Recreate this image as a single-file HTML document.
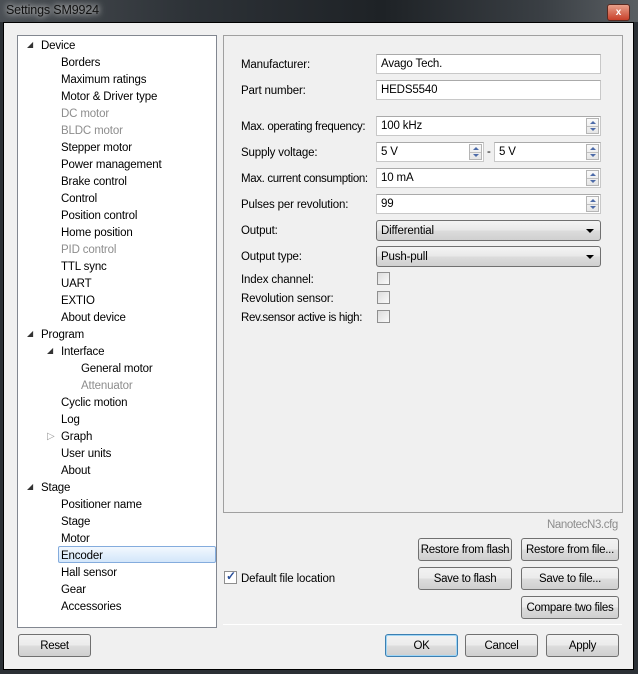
<!DOCTYPE html>
<html><head><meta charset="utf-8"><style>
*{margin:0;padding:0;box-sizing:border-box}
body{width:638px;height:674px;background:#2b3035;font-family:"Liberation Sans",sans-serif;font-size:11.5px;letter-spacing:-0.15px;color:#000;position:relative;overflow:hidden}
.title{position:absolute;left:0;top:0;width:638px;height:22px;background:linear-gradient(90deg,#4a4f54 0%,#2d3237 30%,#1e2226 60%,#3a3f44 85%,#5a5f63 100%)}
.title span{position:absolute;left:6px;top:3px;font-size:12.5px;color:#111;text-shadow:0 0 6px #ccc,0 0 8px #ccc}
.close{position:absolute;left:607px;top:4px;width:23px;height:17px;background:linear-gradient(#e8a08a,#c8402a);border:1px solid #5a2a20;border-radius:3px;color:#fff;font-size:10px;font-weight:bold;text-align:center;line-height:15px}
.client{position:absolute;left:3px;top:22px;width:631px;height:648px;background:#f0f0f0;border:1px solid #000}
.a{position:absolute}
.tree{left:17px;top:35px;width:200px;height:593px;background:#fff;border:1px solid #828790}
.ti{position:absolute;height:17px;line-height:17px;white-space:nowrap;margin-top:1px}
.g{color:#8d8d8d}
.arr{position:absolute;font-size:8px;color:#333;margin-top:1px}
.sel{left:58px;top:546px;width:158px;height:17px;border:1px solid #84acdd;border-radius:2px;background:linear-gradient(#f2f8fe,#d3e6fa)}
.panel{left:223px;top:35px;width:400px;height:478px;border:1px solid #a0a0a0;background:#f0f0f0}
.lbl{position:absolute;left:241px;white-space:nowrap;margin-top:2px}
.inp{position:absolute;height:20px;background:#fff;border:1px solid #c8c8c8;border-top-color:#aaa;padding-left:4px;line-height:19px}
.spin{position:absolute;right:1px;top:1px;width:13px;height:16px;border:1px solid #b5b5b5;background:linear-gradient(#fafafa,#e6e6e6)}
.spin:before{content:"";position:absolute;left:3px;top:2px;border:3px solid transparent;border-bottom:3px solid #4d6ba8;border-top:0}
.spin:after{content:"";position:absolute;left:3px;top:9px;border:3px solid transparent;border-top:3px solid #4d6ba8;border-bottom:0}
.spin i{position:absolute;left:0;top:7px;width:11px;height:1px;background:#c0c0c0}
.combo{position:absolute;left:376px;width:225px;height:21px;border:1px solid #707070;border-radius:3px;background:linear-gradient(#f4f4f4,#e8e8e8 50%,#dcdcdc 51%,#d0d0d0);padding-left:4px;line-height:20px}
.combo:after{content:"";position:absolute;right:6px;top:8px;border:4px solid transparent;border-top:4px solid #000;border-bottom:0}
.cb{position:absolute;width:13px;height:13px;border:1px solid #8f8f8f;background:linear-gradient(135deg,#dcdcdc,#fafafa)}
.btn{position:absolute;height:23px;border:1px solid #707070;border-radius:3px;background:linear-gradient(#f2f2f2,#ebebeb 50%,#dddddd 51%,#cfcfcf);text-align:center;line-height:22px;white-space:nowrap;letter-spacing:-0.3px}
</style></head><body>
<div class="title"><span>Settings SM9924</span><div class="close">x</div></div>
<div class="client"></div>
<div class="a tree"></div>
<div class="a sel"></div>
<div class="arr a" style="left:27px;top:39px">◢</div>
<div class="ti" style="left:41px;top:37px">Device</div>
<div class="ti" style="left:61px;top:54px">Borders</div>
<div class="ti" style="left:61px;top:71px">Maximum ratings</div>
<div class="ti" style="left:61px;top:88px">Motor &amp; Driver type</div>
<div class="ti g" style="left:61px;top:105px">DC motor</div>
<div class="ti g" style="left:61px;top:122px">BLDC motor</div>
<div class="ti" style="left:61px;top:139px">Stepper motor</div>
<div class="ti" style="left:61px;top:156px">Power management</div>
<div class="ti" style="left:61px;top:173px">Brake control</div>
<div class="ti" style="left:61px;top:190px">Control</div>
<div class="ti" style="left:61px;top:207px">Position control</div>
<div class="ti" style="left:61px;top:224px">Home position</div>
<div class="ti g" style="left:61px;top:241px">PID control</div>
<div class="ti" style="left:61px;top:258px">TTL sync</div>
<div class="ti" style="left:61px;top:275px">UART</div>
<div class="ti" style="left:61px;top:292px">EXTIO</div>
<div class="ti" style="left:61px;top:309px">About device</div>
<div class="arr a" style="left:27px;top:328px">◢</div>
<div class="ti" style="left:41px;top:326px">Program</div>
<div class="arr a" style="left:47px;top:345px">◢</div>
<div class="ti" style="left:61px;top:343px">Interface</div>
<div class="ti" style="left:81px;top:360px">General motor</div>
<div class="ti g" style="left:81px;top:377px">Attenuator</div>
<div class="ti" style="left:61px;top:394px">Cyclic motion</div>
<div class="ti" style="left:61px;top:411px">Log</div>
<div class="arr a" style="left:47px;top:430px;color:#999;font-size:10px">▷</div>
<div class="ti" style="left:61px;top:428px">Graph</div>
<div class="ti" style="left:61px;top:445px">User units</div>
<div class="ti" style="left:61px;top:462px">About</div>
<div class="arr a" style="left:27px;top:481px">◢</div>
<div class="ti" style="left:41px;top:479px">Stage</div>
<div class="ti" style="left:61px;top:496px">Positioner name</div>
<div class="ti" style="left:61px;top:513px">Stage</div>
<div class="ti" style="left:61px;top:530px">Motor</div>
<div class="ti" style="left:61px;top:547px">Encoder</div>
<div class="ti" style="left:61px;top:564px">Hall sensor</div>
<div class="ti" style="left:61px;top:581px">Gear</div>
<div class="ti" style="left:61px;top:598px">Accessories</div>

<div class="a panel"></div>
<div class="lbl" style="top:57px">Manufacturer:</div>
<div class="inp" style="left:376px;top:54px;width:225px">Avago Tech.</div>
<div class="lbl" style="top:83px">Part number:</div>
<div class="inp" style="left:376px;top:80px;width:225px">HEDS5540</div>
<div class="lbl" style="top:119px;letter-spacing:-0.35px">Max. operating frequency:</div>
<div class="inp" style="left:376px;top:116px;width:225px">100 kHz<div class="spin"><i></i></div></div>
<div class="lbl" style="top:145px">Supply voltage:</div>
<div class="inp" style="left:376px;top:142px;width:108px">5 V<div class="spin"><i></i></div></div>
<div class="a" style="left:487px;top:146px">-</div>
<div class="inp" style="left:494px;top:142px;width:107px">5 V<div class="spin"><i></i></div></div>
<div class="lbl" style="top:171px;letter-spacing:-0.35px">Max. current consumption:</div>
<div class="inp" style="left:376px;top:168px;width:225px">10 mA<div class="spin"><i></i></div></div>
<div class="lbl" style="top:197px">Pulses per revolution:</div>
<div class="inp" style="left:376px;top:194px;width:225px">99<div class="spin"><i></i></div></div>
<div class="lbl" style="top:223px">Output:</div>
<div class="combo" style="top:220px">Differential</div>
<div class="lbl" style="top:249px">Output type:</div>
<div class="combo" style="top:246px">Push-pull</div>
<div class="lbl" style="top:272px">Index channel:</div>
<div class="cb" style="left:377px;top:272px"></div>
<div class="lbl" style="top:291px">Revolution sensor:</div>
<div class="cb" style="left:377px;top:291px"></div>
<div class="lbl" style="top:310px;letter-spacing:-0.35px">Rev.sensor active is high:</div>
<div class="cb" style="left:377px;top:310px"></div>

<div class="a" style="left:547px;top:519px;color:#8d8d8d;letter-spacing:-0.4px">NanotecN3.cfg</div>
<div class="btn" style="left:418px;top:538px;width:94px">Restore from flash</div>
<div class="btn" style="left:521px;top:538px;width:98px">Restore from file...</div>
<div class="cb" style="left:224px;top:571px;background:#fff"></div>
<div class="a" style="left:226px;top:569px;color:#2a4f9a;font-size:12px;font-weight:bold">✓</div>
<div class="a" style="left:241px;top:573px">Default file location</div>
<div class="btn" style="left:418px;top:567px;width:94px">Save to flash</div>
<div class="btn" style="left:521px;top:567px;width:98px">Save to file...</div>
<div class="btn" style="left:521px;top:596px;width:98px">Compare two files</div>
<div class="a" style="left:223px;top:624px;width:399px;height:1px;background:#a0a0a0;border-bottom:1px solid #fff"></div>
<div class="btn" style="left:18px;top:634px;width:73px">Reset</div>
<div class="btn" style="left:385px;top:634px;width:73px;border-color:#3c7fb1;box-shadow:inset 0 0 0 1px #9fd5f5">OK</div>
<div class="btn" style="left:465px;top:634px;width:73px">Cancel</div>
<div class="btn" style="left:546px;top:634px;width:73px">Apply</div>
</body></html>
